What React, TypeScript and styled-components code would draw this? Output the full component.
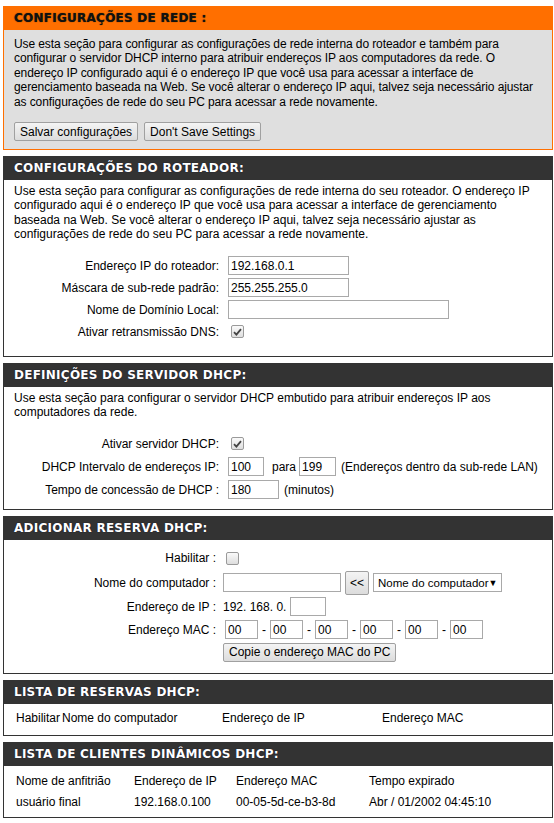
import { ReactNode } from "react";
import styled, { createGlobalStyle, css } from "styled-components";

const GlobalStyle = createGlobalStyle`
  body {
    margin: 0;
    background: #fff;
    font-family: Tahoma, "Liberation Sans", Arial, sans-serif;
    font-size: 12px;
    color: #000;
  }
`;

type Tone = "orange" | "dark";

const Page = styled.div`
  width: 550px;
  padding: 6px 1px 3px 3px;
  display: flex;
  flex-direction: column;
  gap: 6px;
`;

const Box = styled.section<{ $tone: Tone }>`
  border: 1px solid ${(p) => (p.$tone === "orange" ? "#ff6f00" : "#333")};
  background: ${(p) => (p.$tone === "orange" ? "#dfdfdf" : "#fff")};
`;

const Header = styled.h2<{ $tone: Tone }>`
  margin: 0;
  height: 23px;
  line-height: 23px;
  padding: 0 10px;
  font-family: "DejaVu Sans", Verdana, sans-serif;
  font-size: 12px;
  font-weight: bold;
  letter-spacing: 0.25px;
  ${(p) =>
    p.$tone === "orange"
      ? css`
          background: #ff6f00;
          color: #111;
          text-shadow: 0 0 1px #3a2a00;
        `
      : css`
          background: #333;
          color: #fff;
          text-shadow: 0 0 1px #002;
        `}
`;

const Body = styled.div<{ $pad?: string }>`
  padding: ${(p) => p.$pad ?? "7px 10px 8px"};
`;

const Desc = styled.p<{ $tight?: boolean }>`
  margin: 0;
  line-height: 14.4px;
  letter-spacing: ${(p) => (p.$tight ? "-0.1px" : "0")};
`;

const ButtonRow = styled.div`
  display: flex;
  gap: 6px;
  margin-top: 13px;
`;

const Button = styled.button<{ $h?: number }>`
  font-family: inherit;
  font-size: 12px;
  color: #000;
  height: ${(p) => p.$h ?? 19}px;
  padding: 0 5px;
  border: 1px solid #a0a0a0;
  border-radius: 2px;
  background: linear-gradient(#f4f4f4, #dcdcdc);
  cursor: pointer;
`;

const Form = styled.div<{ $label: number; $gap: number; $rows: string; $top: number }>`
  display: grid;
  grid-template-columns: ${(p) => p.$label}px 1fr;
  column-gap: ${(p) => p.$gap}px;
  grid-template-rows: ${(p) => p.$rows};
  align-items: center;
  margin-top: ${(p) => p.$top}px;
`;

const Label = styled.span`
  text-align: right;
  white-space: nowrap;
`;

const Field = styled.div<{ $gap?: number }>`
  display: flex;
  align-items: center;
  gap: ${(p) => p.$gap ?? 5}px;
  white-space: nowrap;
`;

const TextBox = styled.input<{ $w: number }>`
  box-sizing: border-box;
  width: ${(p) => p.$w}px;
  height: 19px;
  padding: 0 2px;
  border: 1px solid #a9a9a9;
  font-family: inherit;
  font-size: 12px;
  color: #000;
  background: #fff;
  outline: none;
`;

const Check = styled.span`
  box-sizing: border-box;
  width: 13px;
  height: 13px;
  margin-left: 3px;
  border: 1px solid #9a9a9a;
  border-radius: 2px;
  background: linear-gradient(#fafafa, #dedede);
  display: inline-flex;
  align-items: center;
  justify-content: center;
`;

const Select = styled.div`
  box-sizing: border-box;
  width: 129px;
  height: 19px;
  border: 1px solid #a9a9a9;
  background: #fff;
  display: flex;
  align-items: center;
  justify-content: space-between;
  padding: 0 4px;
  font-size: 11.5px;
`;

const Arrow = styled.span`
  font-size: 9px;
`;

const Dash = styled.span`
  margin: 0 1px;
`;

const Table = styled.div<{ $cols: string }>`
  display: grid;
  grid-template-columns: ${(p) => p.$cols};
  grid-auto-rows: 21px;
  align-items: center;
  white-space: nowrap;
`;

function Section({ title, tone = "dark", children, pad }: { title: string; tone?: Tone; children: ReactNode; pad?: string }) {
  return (
    <Box $tone={tone}>
      <Header $tone={tone}>{title}</Header>
      <Body $pad={pad}>{children}</Body>
    </Box>
  );
}

function CheckBox({ on }: { on?: boolean }) {
  return (
    <Check>
      {on && (
        <svg width="9" height="8" viewBox="0 0 9 8">
          <path d="M1 4.2 L3.4 6.6 L8 1.2" fill="none" stroke="#444" strokeWidth="1.8" />
        </svg>
      )}
    </Check>
  );
}

export default function App() {
  const mac = ["00", "00", "00", "00", "00", "00"];
  return (
    <Page>
      <GlobalStyle />
      <Section title="CONFIGURAÇÕES DE REDE :" tone="orange">
        <Desc $tight>
          Use esta seção para configurar as configurações de rede interna do roteador e também para configurar o
          servidor DHCP interno para atribuir endereços IP aos computadores da rede. O endereço IP configurado aqui é o
          endereço IP que você usa para acessar a interface de gerenciamento baseada na Web. Se você alterar o
          endereço IP aqui, talvez seja necessário ajustar as configurações de rede do seu PC para acessar a rede
          novamente.
        </Desc>
        <ButtonRow>
          <Button>Salvar configurações</Button>
          <Button>Don't Save Settings</Button>
        </ButtonRow>
      </Section>

      <Section title="CONFIGURAÇÕES DO ROTEADOR:" pad="4px 10px 13px">
        <Desc>
          Use esta seção para configurar as configurações de rede interna do seu roteador. O endereço IP configurado
          aqui é o endereço IP que você usa para acessar a interface de gerenciamento baseada na Web. Se você alterar o
          endereço IP aqui, talvez seja necessário ajustar as configurações de rede do seu PC para acessar a rede
          novamente.
        </Desc>
        <Form $label={205} $gap={9} $rows="repeat(4, 22px)" $top={13}>
          <Label>Endereço IP do roteador:</Label>
          <Field>
            <TextBox $w={121} defaultValue="192.168.0.1" />
          </Field>
          <Label>Máscara de sub-rede padrão:</Label>
          <Field>
            <TextBox $w={121} defaultValue="255.255.255.0" />
          </Field>
          <Label>Nome de Domínio Local:</Label>
          <Field>
            <TextBox $w={221} defaultValue="" />
          </Field>
          <Label>Ativar retransmissão DNS:</Label>
          <Field>
            <CheckBox on />
          </Field>
        </Form>
      </Section>

      <Section title="DEFINIÇÕES DO SERVIDOR DHCP:" pad="4px 10px 8px">
        <Desc>
          Use esta seção para configurar o servidor DHCP embutido para atribuir endereços IP aos computadores da rede.
        </Desc>
        <Form $label={205} $gap={9} $rows="repeat(3, 23px)" $top={13}>
          <Label>Ativar servidor DHCP:</Label>
          <Field>
            <CheckBox on />
          </Field>
          <Label>DHCP Intervalo de endereços IP:</Label>
          <Field>
            <TextBox $w={36} defaultValue="100" />
            <span style={{ marginLeft: 3 }}>para</span>
            <TextBox $w={37} defaultValue="199" style={{ marginLeft: -2 }} />
            <span>(Endereços dentro da sub-rede LAN)</span>
          </Field>
          <Label>Tempo de concessão de DHCP :</Label>
          <Field>
            <TextBox $w={51} defaultValue="180" />
            <span>(minutos)</span>
          </Field>
        </Form>
      </Section>

      <Section title="ADICIONAR RESERVA DHCP:" pad="6px 10px 10px">
        <Form $label={202} $gap={7} $rows="24px 25px 23px 23px 22px" $top={0}>
          <Label>Habilitar :</Label>
          <Field>
            <CheckBox />
          </Field>
          <Label>Nome do computador :</Label>
          <Field $gap={4}>
            <TextBox $w={118} defaultValue="" />
            <Button $h={24} style={{ width: 24, padding: 0 }}>
              &lt;&lt;
            </Button>
            <Select>
              <span>Nome do computador</span>
              <Arrow>▼</Arrow>
            </Select>
          </Field>
          <Label>Endereço de IP :</Label>
          <Field $gap={4}>
            <span>192. 168. 0.</span>
            <TextBox $w={36} defaultValue="" />
          </Field>
          <Label>Endereço MAC :</Label>
          <Field $gap={3} style={{ marginLeft: 2 }}>
            {mac.map((m, i) => (
              <Field key={i} $gap={3}>
                {i > 0 && <Dash>-</Dash>}
                <TextBox $w={33} defaultValue={m} />
              </Field>
            ))}
          </Field>
          <span />
          <Field>
            <Button>Copie o endereço MAC do PC</Button>
          </Field>
        </Form>
      </Section>

      <Section title="LISTA DE RESERVAS DHCP:" pad="3px 12px 7px">
        <Table $cols="46px 160px 160px 1fr">
          <span>Habilitar</span>
          <span>Nome do computador</span>
          <span>Endereço de IP</span>
          <span>Endereço MAC</span>
        </Table>
      </Section>

      <Section title="LISTA DE CLIENTES DINÂMICOS DHCP:" pad="4px 12px 5px">
        <Table $cols="118px 102px 133px 1fr">
          <span>Nome de anfitrião</span>
          <span>Endereço de IP</span>
          <span>Endereço MAC</span>
          <span>Tempo expirado</span>
          <span>usuário final</span>
          <span>192.168.0.100</span>
          <span>00-05-5d-ce-b3-8d</span>
          <span>Abr / 01/2002 04:45:10</span>
        </Table>
      </Section>
    </Page>
  );
}
